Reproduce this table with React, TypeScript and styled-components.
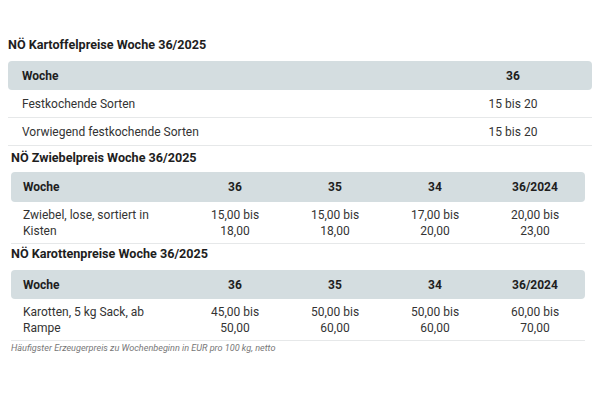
import React from "react";
import styled, { createGlobalStyle } from "styled-components";

const Global = createGlobalStyle`
  html, body { margin: 0; padding: 0; background: #fff; }
  body { font-family: Roboto, "Liberation Sans", Arial, sans-serif; color: #222; }
`;

const Page = styled.div`
  width: 600px;
  height: 400px;
  padding-top: 34px;
  box-sizing: border-box;
  display: flex;
  flex-direction: column;
`;

const Section = styled.section<{ $inset: number }>`
  margin-left: ${(p) => p.$inset}px;
`;

const Title = styled.h3<{ $top: number; $bottom: number }>`
  margin: ${(p) => p.$top}px 0 ${(p) => p.$bottom}px 0;
  font-size: 12.6px;
  line-height: 16px;
  font-weight: 700;
  color: #1e1e1e;
`;

const Table = styled.table`
  border-collapse: separate;
  border-spacing: 0;
  table-layout: fixed;
  font-size: 12px;
  color: #333;
`;

const HeadCell = styled.th<{ $left?: boolean; $w: number; $h: number; $pad: number }>`
  width: ${(p) => p.$w}px;
  height: ${(p) => p.$h}px;
  padding: 0 0 0 ${(p) => (p.$left ? p.$pad : 0)}px;
  background: #d4dde0;
  text-align: ${(p) => (p.$left ? "left" : "center")};
  font-weight: 700;
  color: #1e1e1e;
  line-height: 16px;
  box-sizing: border-box;
  &:first-child { border-radius: 4px 0 0 4px; }
  &:last-child { border-radius: 0 4px 4px 0; }
`;

const Cell = styled.td<{ $left?: boolean; $h: number; $pad: number }>`
  height: ${(p) => p.$h}px;
  padding: 0 0 0 ${(p) => (p.$left ? p.$pad : 0)}px;
  text-align: ${(p) => (p.$left ? "left" : "center")};
  line-height: 16px;
  border-bottom: 1px solid #e6e8e9;
  box-sizing: border-box;
  vertical-align: middle;
`;

const Note = styled.p`
  margin: 1px 0 0 11px;
  font-size: 9.1px;
  line-height: 12px;
  font-style: italic;
  color: #777;
`;

type TableData = {
  title: string;
  head: string[];
  widths: number[];
  rows: React.ReactNode[][];
  headH: number;
  rowH: number;
  pad: number;
};

const tables: (TableData & { inset: number; top: number; bottom: number })[] = [
  {
    title: "NÖ Kartoffelpreise Woche 36/2025",
    head: ["Woche", "36"],
    widths: [426, 158],
    rows: [
      ["Festkochende Sorten", "15 bis 20"],
      ["Vorwiegend festkochende Sorten", "15 bis 20"],
    ],
    headH: 29,
    rowH: 28,
    pad: 14,
    inset: 8,
    top: 3,
    bottom: 8,
  },
  {
    title: "NÖ Zwiebelpreis Woche 36/2025",
    head: ["Woche", "36", "35", "34", "36/2024"],
    widths: [174, 100, 100, 100, 100],
    rows: [
      [
        <>Zwiebel, lose, sortiert in<br />Kisten</>,
        <>15,00 bis<br />18,00</>,
        <>15,00 bis<br />18,00</>,
        <>17,00 bis<br />20,00</>,
        <>20,00 bis<br />23,00</>,
      ],
    ],
    headH: 30,
    rowH: 42,
    pad: 12,
    inset: 11,
    top: 4,
    bottom: 6,
  },
  {
    title: "NÖ Karottenpreise Woche 36/2025",
    head: ["Woche", "36", "35", "34", "36/2024"],
    widths: [174, 100, 100, 100, 100],
    rows: [
      [
        <>Karotten, 5 kg Sack, ab<br />Rampe</>,
        <>45,00 bis<br />50,00</>,
        <>50,00 bis<br />60,00</>,
        <>50,00 bis<br />60,00</>,
        <>60,00 bis<br />70,00</>,
      ],
    ],
    headH: 29,
    rowH: 42,
    pad: 12,
    inset: 11,
    top: 2,
    bottom: 8,
  },
];

export default function App() {
  return (
    <>
      <Global />
      <Page>
        {tables.map((t) => (
          <Section key={t.title} $inset={t.inset}>
            <Title $top={t.top} $bottom={t.bottom}>{t.title}</Title>
            <Table>
              <thead>
                <tr>
                  {t.head.map((h, i) => (
                    <HeadCell key={h} $left={i === 0} $w={t.widths[i]} $h={t.headH} $pad={t.pad}>
                      {h}
                    </HeadCell>
                  ))}
                </tr>
              </thead>
              <tbody>
                {t.rows.map((r, ri) => (
                  <tr key={ri}>
                    {r.map((c, ci) => (
                      <Cell key={ci} $left={ci === 0} $h={t.rowH} $pad={t.pad}>
                        {c}
                      </Cell>
                    ))}
                  </tr>
                ))}
              </tbody>
            </Table>
          </Section>
        ))}
        <Note>Häufigster Erzeugerpreis zu Wochenbeginn in EUR pro 100 kg, netto</Note>
      </Page>
    </>
  );
}
